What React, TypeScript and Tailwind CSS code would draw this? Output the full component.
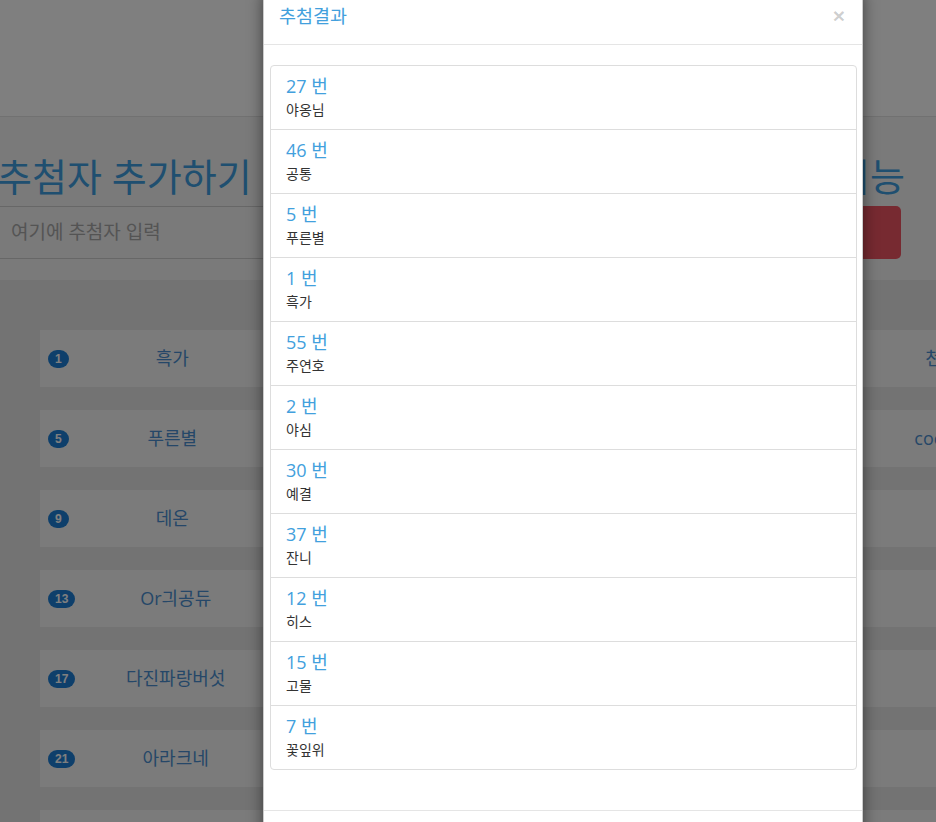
const results = [
  { no: 27, name: "야옹님" },
  { no: 46, name: "공통" },
  { no: 5, name: "푸른별" },
  { no: 1, name: "흑가" },
  { no: 55, name: "주연호" },
  { no: 2, name: "야심" },
  { no: 30, name: "예결" },
  { no: 37, name: "잔니" },
  { no: 12, name: "히스" },
  { no: 15, name: "고물" },
  { no: 7, name: "꽃잎위" },
];

const entries = [
  ["흑가", "공통", "야심", "천사소녀"],
  ["푸른별", "주연호", "예결", "coconut12"],
  ["데온", "잔니", "히스", "루나"],
  ["Or긔공듀", "고물", "꽃잎위", "별빛"],
  ["다진파랑버섯", "야옹님", "바람", "하늘"],
  ["아라크네", "모카", "초코", "달님"],
  ["솜사탕", "구름", "새벽", "노을"],
];

function Badge({ n }: { n: number }) {
  return (
    <span className="inline-block rounded-[10px] bg-[#1d7fd6] px-[7px] py-[3px] font-['Liberation_Sans',sans-serif] text-[12px] leading-[12px] font-bold text-white">
      {n}
    </span>
  );
}

export default function App() {
  return (
    <div className="relative h-[822px] w-[936px] overflow-hidden bg-white font-['Open_Sans','Noto_Sans_CJK_KR',sans-serif]">
      {/* page behind the modal */}
      <div className="h-[117px] border-b border-[#e2e2e2] bg-white" />

      <section className="flex h-[163px] justify-between bg-[#f4f4f4]">
        <div className="ml-[-3px] w-[400px] pt-[38px]">
          <h1 className="text-[38px] leading-[42px] whitespace-nowrap text-[#3f9ee0]">추첨자 추가하기</h1>
          <div className="mt-[9px] flex h-[53px] items-center border-y border-[#cfcfcf] bg-[#f4f4f4] pl-[14px] text-[19px] text-[#a9a9a9]">
            여기에 추첨자 입력
          </div>
        </div>
        <div className="mr-[35px] flex w-[320px] flex-col items-end pt-[38px]">
          <h2 className="mr-[-4px] text-[38px] leading-[42px] whitespace-nowrap text-[#3f9ee0]">추첨 기능</h2>
          <button className="mt-[9px] h-[53px] w-[120px] rounded-[5px] bg-[#ef5562]" />
        </div>
      </section>

      <section className="bg-[#e7e7e7] pt-[50px] pl-[40px]">
        <div className="grid grid-cols-[repeat(4,244px)] gap-x-[18px] gap-y-[23px]">
          {entries.flatMap((row, r) =>
            row.map((name, c) => (
              <div key={`${r}-${c}`} className="flex h-[57px] items-center bg-[#f7f7f7] px-[8px]">
                <Badge n={r * 4 + c + 1} />
                <span className="flex-1 text-center text-[18px] whitespace-nowrap text-[#4b8fd0]">{name}</span>
              </div>
            ))
          )}
        </div>
      </section>

      {/* backdrop */}
      <div className="absolute inset-0 bg-black/50" />

      {/* modal */}
      <div className="absolute top-[-13px] left-[263px] w-[600px] rounded-[6px] border border-black/20 bg-white shadow-[0_5px_15px_rgba(0,0,0,0.5)]">
        <div className="flex items-center justify-between border-b border-[#e5e5e5] p-[15px]">
          <h4 className="text-[18.5px] leading-[26px] text-[#42a0dd]">추첨결과</h4>
          <button className="mt-[-2px] mr-[2px] font-['Liberation_Sans',sans-serif] text-[21px] leading-none font-bold text-black/20">
            ×
          </button>
        </div>
        <div className="pt-[20px] pr-[5px] pb-[40px] pl-[6px]">
          <div className="rounded-[4px] border border-[#ddd]">
            {results.map((r, i) => (
              <div
                key={r.no}
                className={`px-[15px] py-[10px] ${i < results.length - 1 ? "border-b border-[#ddd]" : ""}`}
              >
                <div className="mb-[5px] text-[18px] leading-[20px] text-[#42a0dd]">{r.no} 번</div>
                <div className="text-[14px] leading-[18px] text-[#333]">{r.name}</div>
              </div>
            ))}
          </div>
        </div>
        <div className="h-[70px] border-t border-[#e5e5e5]" />
      </div>
    </div>
  );
}
